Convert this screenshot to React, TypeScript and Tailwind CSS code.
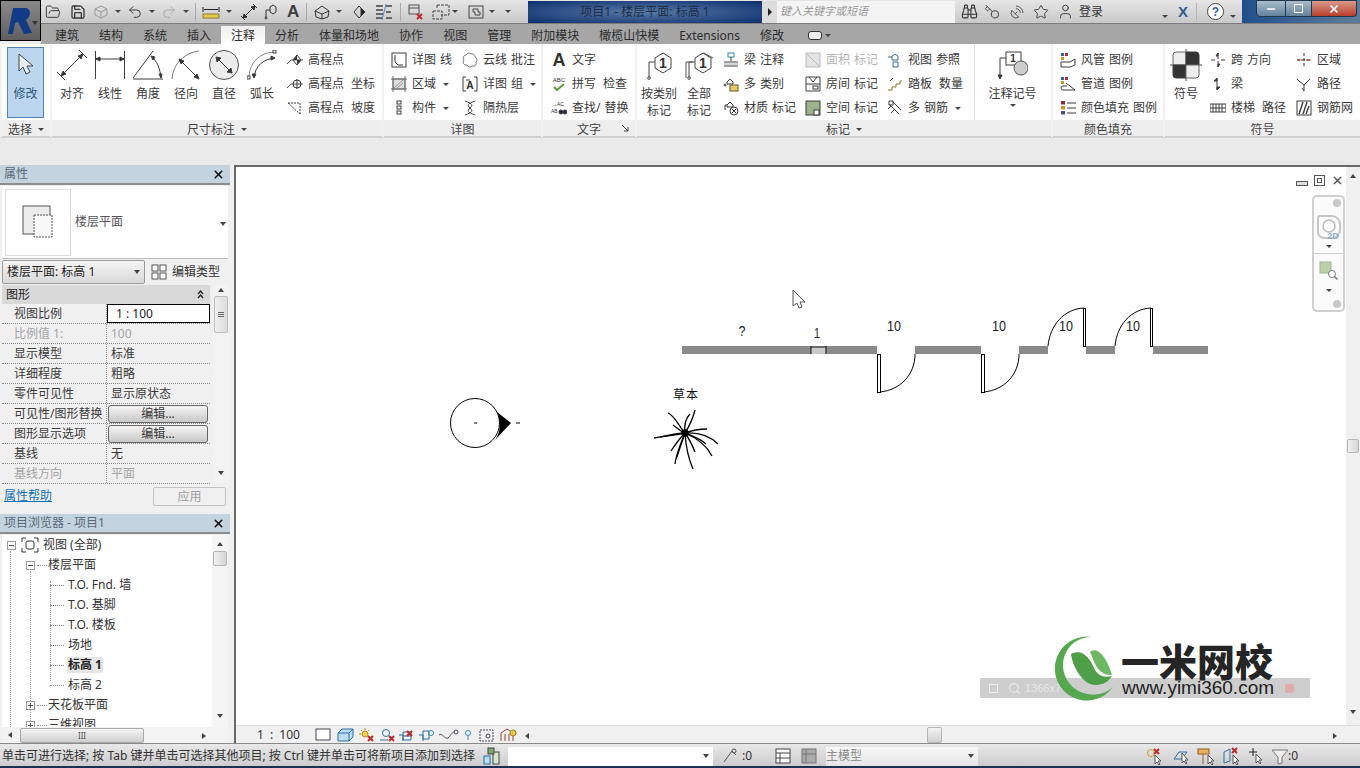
import type { ReactNode } from 'react';
import { Binoculars, FolderOpen, Key, Minus, Save, SatelliteDish, Search, Star, Undo2, Redo2, User, X } from 'lucide-react';

const dim = '#3d3d3d';

function Ico({ children, w = 16, h = 16, vb }: { children: ReactNode; w?: number; h?: number; vb?: string }) {
  return (
    <svg width={w} height={h} viewBox={vb ?? `0 0 ${w} ${h}`} fill="none" stroke={dim} strokeWidth="1" className="shrink-0">
      {children}
    </svg>
  );
}

function Caret({ className = '' }: { className?: string }) {
  return <span className={`inline-block w-0 h-0 border-x-[3px] border-x-transparent border-t-[3px] border-t-[#444] ${className}`} />;
}

function Tool({ icon, text, gray, wide }: { icon: ReactNode; text: ReactNode; gray?: boolean; wide?: boolean }) {
  return (
    <div className={`h-6 flex items-center whitespace-pre ${wide ? '[word-spacing:4px]' : '[word-spacing:1px]'} ${gray ? 'text-[#b5b5b5]' : ''}`}>
      <span className="w-4 h-4 flex items-center justify-center shrink-0">{icon}</span>
      <span className="ml-[5px]">{text}</span>
    </div>
  );
}

function Big({ icon, label, w, className = '' }: { icon: ReactNode; label: ReactNode; w: number; className?: string }) {
  return (
    <div style={{ width: w }} className={`flex flex-col items-center pt-[6px] shrink-0 leading-[17px] ${className}`}>
      <div className="h-[30px] flex items-center justify-center">{icon}</div>
      <div className="mt-[5px] text-center">{label}</div>
    </div>
  );
}

function Panel({ w, label, children, corner }: { w: number; label: ReactNode; children: ReactNode; corner?: ReactNode }) {
  return (
    <div style={{ width: w }} className="shrink-0 flex flex-col">
      <div className="h-[76px] flex bg-white overflow-hidden">{children}</div>
      <div className="relative h-[17px] pt-[3px] flex items-center justify-center gap-[6px] bg-[#eeeeee] border-b border-[#cfcfcf] text-[#444]">
        {label}
        {corner}
      </div>
    </div>
  );
}

function Tag({ double }: { double?: boolean }) {
  return (
    <Ico w={32} h={30}>
      {double && <path d="M13 8l8-5 9 5" stroke="#555" />}
      {double && <path d="M3 28V12h7" stroke="#555" />}
      <path d="M6 12h6M6 12v15" stroke="#444" />
      <path d="M12 8l8-5 8 5v10l-8 5-8-5z" fill="#fff" stroke="#444" />
      <circle cx="6" cy="28" r="1.3" />
      <text x="20" y="18" textAnchor="middle" fontSize="14" fontWeight="700" stroke="none" fill="#333" fontFamily="Liberation Sans, sans-serif">1</text>
    </Ico>
  );
}

function Elev({ kind }: { kind: number }) {
  return (
    <Ico>
      <path d="M0 12l4-4h12" stroke="#555" />
      {kind === 0 && <path d="M6 8l4-5v5zM10 8h4l-4 5z" fill="#333" stroke="none" />}
      {kind === 0 && <path d="M10 3l4 5-4 5-4-5z" />}
      {kind === 1 && <circle cx="10" cy="8" r="4" />}
      {kind === 1 && <path d="M10 3v10" />}
    </Ico>
  );
}

const quickIcon = 'h-[16px] w-[16px] text-[#3d3d3d]';

function TitleBar() {
  return (
    <div className="h-6 flex items-center bg-linear-to-b from-[#e6e6e6] to-[#c9c9c9] border-b border-[#7c7c7c]">
      <div className="w-[487px] flex items-center shrink-0 overflow-hidden">
        <FolderOpen className={`${quickIcon} ml-[4px]`} strokeWidth={1.5} />
        <Save className={`${quickIcon} ml-[9px]`} strokeWidth={2} />
        <svg width="16" height="16" viewBox="0 0 16 16" fill="none" stroke="#9a9a9a" className="ml-[7px] shrink-0"><path d="M2 5l6-3 6 3v6l-6 3-6-3zM2 5l6 3 6-3M8 8v6" /></svg>
        <Caret className="ml-[6px]" />
        <Undo2 className={`${quickIcon} ml-[6px]`} strokeWidth={1.5} />
        <Caret className="ml-[6px]" />
        <Redo2 className="h-[16px] w-[16px] text-[#a9a9a9] ml-[6px]" strokeWidth={1.5} />
        <Caret className="ml-[6px]" />
        <span className="ml-[6px] h-[18px] border-l border-[#ababab]" />
        <svg width="18" height="16" viewBox="0 0 18 16" fill="none" className="ml-[6px] shrink-0"><path d="M1 3v5M17 3v5M2 5.5h14" stroke="#222" /><rect x="1" y="10" width="16" height="4" fill="#e8c84e" stroke="#8a7a2a" /></svg>
        <Caret className="ml-[6px]" />
        <svg width="18" height="18" viewBox="0 0 18 18" fill="none" stroke="#333" className="ml-[8px] shrink-0"><path d="M3 15L15 3M1 13l4 4M13 1l4 4" /><path d="M3 15l1-4 3 3zM15 3l-4 1 3 3z" fill="#333" /></svg>
        <svg width="16" height="16" viewBox="0 0 16 16" fill="none" stroke="#333" className="ml-[5px] shrink-0"><path d="M7 3l3-2 3 2v5l-3 2-3-2z" /><path d="M7 6H3v7" /><circle cx="3" cy="14" r="1" /></svg>
        <span className="ml-[8px] text-[17px] font-bold leading-none text-[#3d3d3d] font-['Liberation_Sans',sans-serif]">A</span>
        <span className="ml-[7px] h-[18px] border-l border-[#ababab]" />
        <svg width="16" height="16" viewBox="0 0 16 16" fill="none" stroke="#333" className="ml-[7px] shrink-0"><path d="M1 7l7-5 7 5-1 6-6 2-6-2z" /><path d="M1 7l7 3 7-3M8 10v5" /></svg>
        <Caret className="ml-[6px]" />
        <svg width="14" height="14" viewBox="0 0 14 14" fill="none" stroke="#333" className="ml-[10px] shrink-0"><path d="M7 1l6 6-6 6-5-6z" /><path d="M9 3l4 4-4 4z" fill="#222" /></svg>
        <svg width="18" height="16" viewBox="0 0 18 16" fill="none" stroke="#444" className="ml-[9px] shrink-0"><path d="M8 2H1M8 6H1M8 10H1M8 14H1M11 2h6M11 8h5M11 14h6" strokeWidth="1.4" /><path d="M11 0L7 16" stroke="#4d8fd0" /></svg>
        <span className="ml-[7px] h-[18px] border-l border-[#ababab]" />
        <svg width="16" height="16" viewBox="0 0 16 16" fill="none" stroke="#555" className="ml-[7px] shrink-0"><rect x="1" y="1" width="10" height="9" /><path d="M1 4h10" /><path d="M9 10l5 5M14 10l-5 5" stroke="#c02a2a" strokeWidth="2" /></svg>
        <svg width="18" height="16" viewBox="0 0 18 16" fill="none" stroke="#444" className="ml-[8px] shrink-0"><path d="M5 1h12v10H9M5 1v4M1 7h9v8H1z" strokeDasharray="3 1" /></svg>
        <Caret className="ml-[2px]" />
        <svg width="16" height="14" viewBox="0 0 16 14" fill="none" stroke="#444" className="ml-[10px] shrink-0"><rect x="1" y="1" width="14" height="12" /><path d="M5 4h5v3h2v3H7V7H5z" /></svg>
        <Caret className="ml-[5px]" />
        <Caret className="ml-[10px]" />
      </div>
      <div className="w-[234px] h-[22px] shrink-0 flex items-center justify-center bg-radial from-[#5a7ba8] to-[#0c2d6b] text-[#1b2c44] text-xs whitespace-pre">
        项目1 - 楼层平面: 标高 1
      </div>
      <div className="w-[15px] h-[22px] shrink-0 flex items-center justify-center bg-[#dcdcdc]">
        <span className="w-0 h-0 border-y-[4px] border-y-transparent border-l-[4px] border-l-[#222]" />
      </div>
      <div className="w-[178px] h-[22px] shrink-0 flex items-center pl-[3px] bg-[#f4f4f4] text-[#9a9a9a] text-[11px] italic">键入关键字或短语</div>
      <Binoculars className="h-[17px] w-[17px] ml-[6px] text-[#333] shrink-0" strokeWidth={1.5} />
      <Key className="h-[16px] w-[16px] ml-[6px] text-[#444] shrink-0 -scale-x-100" strokeWidth={1.5} />
      <SatelliteDish className="h-[16px] w-[16px] ml-[9px] text-[#444] shrink-0" strokeWidth={1.3} />
      <Star className="h-[16px] w-[16px] ml-[8px] text-[#333] shrink-0" strokeWidth={1.3} />
      <User className="h-[17px] w-[17px] ml-[8px] text-[#333] shrink-0" strokeWidth={1.3} />
      <span className="ml-[5px] w-[60px] text-xs text-[#333] shrink-0">登录</span>
      <span className="ml-[23px]"><Caret /></span>
      <span className="ml-[10px] text-[15px] font-bold leading-none text-[#2f5f8f] font-['Liberation_Sans',sans-serif]">X</span>
      <span className="ml-[8px] h-[18px] border-l border-[#b5b5b5]" />
      <span className="ml-[10px] w-[17px] h-[17px] rounded-full border border-[#444] bg-white flex items-center justify-center text-[12px] font-bold text-[#2b63a8] font-['Liberation_Sans',sans-serif] shrink-0">?</span>
      <span className="ml-[6px]"><Caret /></span>
      <div className="ml-[6px] flex-1 h-[23px] bg-linear-to-r from-[#1f4f8c] to-[#5c7c99] flex items-start">
        <div className="ml-[14px] w-[30px] h-[17px] bg-linear-to-b from-[#a9bccb] to-[#64829b] border border-[#24364c] rounded-bl flex items-center justify-center">
          <Minus className="h-3 w-3 text-white" strokeWidth={3} />
        </div>
        <div className="w-[26px] h-[17px] bg-linear-to-b from-[#a9bccb] to-[#64829b] border-y border-r border-[#24364c] flex items-center justify-center">
          <span className="w-[9px] h-[9px] border border-white" />
        </div>
        <div className="w-[45px] h-[17px] bg-linear-to-b from-[#d69a8c] to-[#b83b2a] border-y border-r border-[#24364c] rounded-br flex items-center justify-center">
          <X className="h-3 w-3 text-white" strokeWidth={3.5} />
        </div>
      </div>
    </div>
  );
}

function Tabs() {
  const tabs = ['建筑', '结构', '系统', '插入', '注释', '分析', '体量和场地', '协作', '视图', '管理', '附加模块', '橄榄山快模', 'Extensions', '修改'];
  return (
    <div className="h-5 flex items-end pl-1 bg-[#a6a6a6] text-[#2c2c2c] text-xs">
      {tabs.map((t) => (
        <span key={t} className={`h-[18px] pt-[2px] px-[10px] flex items-center ${t === '注释' ? 'bg-linear-to-b from-[#eeeeee] to-white' : ''}`}>{t}</span>
      ))}
      <span className="ml-[14px] h-[18px] flex items-center gap-[3px]">
        <span className="w-[14px] h-[9px] rounded-[3px] border border-[#333] bg-[#eee]" />
        <Caret />
      </span>
    </div>
  );
}

function Ribbon() {
  return (
    <div className="h-[94px] flex gap-[2px] pl-[2px] bg-[#f1f1f1] text-xs text-[#3a3a3a] border-b border-[#d5d5d5]">
      <Panel w={48} label={<><span>选择</span><Caret /></>}>
        <div className="ml-[5px] mt-[3px] w-[37px] h-[71px] bg-[#bcd6f0] border border-[#4f81b3] flex flex-col items-center pt-[5px]">
          <svg width="18" height="24" viewBox="0 0 18 24" fill="#e8eef5" stroke="#444"><path d="M2 1v17l4-4 3 7 4-2-3-6h6z" /></svg>
          <span className="mt-[9px] text-[#35587a]">修改</span>
        </div>
      </Panel>

      <Panel w={330} label={<><span>尺寸标注</span><Caret /></>}>
        <Big w={38} className="ml-px" label="对齐" icon={<Ico w={30} h={30}><path d="M0 22l8 8M22 0l8 8M4 26L26 4" /><path d="M4 26l2-5 3 3zM26 4l-5 2 3 3z" fill="#333" /></Ico>} />
        <Big w={38} label="线性" icon={<Ico w={30} h={30}><path d="M.5 1v28M29.5 1v28M1 9h28" /><path d="M1 9l4-2v4zM29 9l-4-2v4z" fill="#333" /></Ico>} />
        <Big w={38} label="角度" icon={<Ico w={30} h={30}><path d="M0 29h30M0 28L20 1" /><path d="M18 6c6 5 9 12 10 22" /><path d="M18 6l4 1-2 3zM28 28l-2-4h3z" fill="#333" /></Ico>} />
        <Big w={38} label="径向" icon={<Ico w={30} h={30}><path d="M1 29C2 14 13 3 28 1" stroke="#777" /><path d="M8 9l20 20" /><path d="M8 9l5 2-3 3zM28 29l-5-2 3-3z" fill="#333" /></Ico>} />
        <Big w={38} label="直径" icon={<Ico w={30} h={30}><circle cx="15" cy="15" r="14.5" fill="#ececec" stroke="#555" /><path d="M7 7l16 16" /><path d="M7 7l5 1-4 4zM23 23l-5-1 4-4z" fill="#333" /></Ico>} />
        <Big w={38} label="弧长" icon={<Ico w={30} h={30}><path d="M2 26C3 12 13 3 26 2" stroke="#888" /><path d="M7 28C8 16 16 9 28 8" /><path d="M7 28l-2-4h4zM28 8l-4-2v4z" fill="#333" /><rect x="0" y="26" width="3" height="3" fill="#fff" /><rect x="26" y="0" width="3" height="3" fill="#fff" /></Ico>} />
        <div className="ml-[6px]">
          <div className="pt-[4px]">
            <Tool wide icon={<Elev kind={0} />} text="高程点" />
            <Tool wide icon={<Elev kind={1} />} text="高程点 坐标" />
            <Tool wide icon={<Ico><path d="M1 3h12v11M1 3l12 11" strokeDasharray="2 1" /></Ico>} text="高程点 坡度" />
          </div>
        </div>
      </Panel>

      <Panel w={157} label="详图">
        <div className="ml-[7px] w-[71px] pt-[4px]">
          <Tool icon={<Ico><rect x="1" y="1" width="14" height="14" /><path d="M4 3v7l3 3h5" /></Ico>} text="详图 线" />
          <Tool icon={<Ico><rect x="2" y="3" width="12" height="10" fill="#dedede" stroke="#888" /><path d="M0 3h16M0 13h16M2 0v16M14 0v16" stroke="#666" /><path d="M3 12l9-8M6 12l6-5" stroke="#999" /></Ico>} text={<>区域 <Caret className="ml-[3px] mb-[2px]" /></>} />
          <Tool icon={<Ico><rect x="6" y="1" width="4" height="3" /><rect x="6" y="6" width="4" height="3" /><rect x="6" y="11" width="4" height="3" /></Ico>} text={<>构件 <Caret className="ml-[3px] mb-[2px]" /></>} />
        </div>
        <div className="pt-[4px]">
          <Tool icon={<Ico><path d="M4 3a3 3 0 015-1 3 3 0 014 3 3 3 0 011 5 3 3 0 01-4 4 3 3 0 01-5-1 3 3 0 01-3-5 3 3 0 012-5z" stroke="#777" /></Ico>} text="云线 批注" />
          <Tool icon={<Ico><path d="M4 1H1v14h3M12 1h3v14h-3" /><text x="8" y="13" textAnchor="middle" fontSize="10" fontWeight="700" stroke="none" fill="#333">A</text><path d="M4 4h4" /></Ico>} text={<>详图 组 <Caret className="ml-[3px] mb-[2px]" /></>} />
          <Tool icon={<Ico><path d="M3 1c8 3 8 4 5 7-3 3-3 4 5 7M13 1C5 4 5 5 8 8c3 3 3 4-5 7" /></Ico>} text="隔热层" />
        </div>
      </Panel>

      <Panel w={92} label="文字" corner={<svg width="7" height="7" viewBox="0 0 7 7" fill="none" stroke="#444" className="absolute right-[6px] top-[5px]"><path d="M0 0l6 6M6 2v4H2" /></svg>}>
        <div className="ml-2 pt-[4px]">
          <div className="h-6 flex items-center"><span className="w-4 text-[18px] font-bold leading-none text-[#333] text-center font-['Liberation_Sans',sans-serif]">A</span><span className="ml-[5px]">文字</span></div>
          <Tool wide icon={<Ico><text x="8" y="6" textAnchor="middle" fontSize="6" stroke="none" fill="#333" fontFamily="Liberation Sans">ABC</text><path d="M3 11l3 3 7-6" stroke="#5a9a30" strokeWidth="2" /></Ico>} text="拼写 检查" />
          <Tool icon={<Ico><text x="1" y="6" fontSize="5" stroke="none" fill="#333" fontFamily="Liberation Sans">→AC</text><text x="0" y="13" fontSize="5" stroke="none" fill="#333" fontFamily="Liberation Sans">AB</text><circle cx="10" cy="12" r="2" fill="#224" /><circle cx="14" cy="12" r="2" fill="#224" /></Ico>} text="查找/ 替换" />
        </div>
      </Panel>

      <Panel w={414} label={<><span>标记</span><Caret /></>}>
        <Big w={40} className="ml-[2px]" icon={<Tag />} label={<>按类别<br />标记</>} />
        <Big w={40} icon={<Tag double />} label={<>全部<br />标记</>} />
        <div className="ml-1 w-[82px] pt-[4px] shrink-0">
          <Tool icon={<Ico><path d="M1 10h14M1 14h14" /><path d="M1 12h14" stroke="#aaa" /><rect x="5" y="1" width="6" height="4" stroke="#3a87b0" /><path d="M8 5v4" /></Ico>} text="梁 注释" />
          <Tool icon={<Ico><path d="M4 6l3-3 3 3v2H4z" /><rect x="7" y="9" width="8" height="6" fill="#e8c86a" stroke="#6a5a20" /><circle cx="2" cy="9" r="1" /></Ico>} text="多 类别" />
          <Tool icon={<Ico><path d="M4 5l3-3 3 3v2H4zM4 5H2v5" /><circle cx="11" cy="11" r="4" /><path d="M9 9l4 4M13 9l-4 4" /></Ico>} text="材质 标记" />
        </div>
        <div className="w-[82px] pt-[4px] shrink-0">
          <Tool gray icon={<Ico><rect x="1" y="1" width="14" height="14" fill="#e4e4e4" stroke="#bbb" /><path d="M2 2l12 12" stroke="#bbb" /></Ico>} text="面积 标记" />
          <Tool icon={<Ico><path d="M1 1h14v14H1zM1 8h14M4 1l4 5 4-5" /><rect x="8" y="10" width="5" height="3" /></Ico>} text="房间 标记" />
          <Tool icon={<Ico><rect x="1" y="1" width="14" height="14" fill="#9db38a" /><rect x="9" y="10" width="5" height="5" fill="#fff" /></Ico>} text="空间 标记" />
        </div>
        <div className="w-[87px] pt-[4px] shrink-0">
          <Tool icon={<Ico><path d="M5 4l3-2 3 2v4H5zM5 5H1M6 10h5v5H6z" stroke="#356a8f" /></Ico>} text="视图 参照" />
          <Tool wide icon={<Ico><path d="M1 14h4v-3h4V8h4V5h2" stroke="#8a7428" /><path d="M3 5l3-3" /></Ico>} text="踏板 数量" />
          <Tool icon={<Ico><path d="M2 4l10 10M6 2l8 8M1 9l3-3M4 13l3-3" /><path d="M2 1h4v4H2z" /></Ico>} text={<>多 钢筋 <Caret className="ml-[3px] mb-[2px]" /></>} />
        </div>
        <div className="w-[76px] border-l border-[#e2e2e2] flex flex-col items-center pt-[6px] shrink-0">
          <Ico w={30} h={30}><rect x="8" y="2" width="15" height="13" fill="#fff" /><path d="M8 8H2v19" /><path d="M2 29l-2-4h4z" fill="#333" /><circle cx="23" cy="18" r="7" fill="#ccc" stroke="#555" /><text x="15" y="12" textAnchor="middle" fontSize="10" fontWeight="700" stroke="none" fill="#333" fontFamily="Liberation Sans">1</text></Ico>
          <span className="mt-[5px] leading-[17px]">注释记号</span>
          <Caret className="mt-[2px]" />
        </div>
      </Panel>

      <Panel w={110} label="颜色填充">
        <div className="ml-[7px] pt-[4px]">
          <Tool icon={<Ico><rect x="1" y="1" width="3" height="3" fill="#3a5a90" stroke="none" /><rect x="5" y="1" width="3" height="3" fill="#a03030" stroke="none" /><rect x="1" y="5" width="3" height="3" fill="#c9962c" stroke="none" /><path d="M1 10h9l5-3v6l-5 2H1z" /></Ico>} text="风管 图例" />
          <Tool icon={<Ico><rect x="1" y="1" width="3" height="3" fill="#3a5a90" stroke="none" /><rect x="5" y="1" width="3" height="3" fill="#a03030" stroke="none" /><rect x="1" y="5" width="3" height="3" fill="#c9962c" stroke="none" /><path d="M6 7l9 7H3a2 2 0 010-4h4" /></Ico>} text="管道 图例" />
          <Tool icon={<Ico><rect x="1" y="1" width="4" height="3.5" fill="#8a3030" stroke="none" /><rect x="1" y="6" width="4" height="3.5" fill="#c9962c" stroke="none" /><rect x="1" y="11" width="4" height="3.5" fill="#44597a" stroke="none" /><path d="M7 3h9M7 8h9M7 13h9" /></Ico>} text="颜色填充 图例" />
        </div>
      </Panel>

      <Panel w={195} label="符号">
        <Big w={40} className="ml-px" label="符号" icon={
          <Ico w={32} h={32}>
            <path d="M16 0v32M0 16h32" stroke="#444" />
            <path d="M6 3h10v13H3V6a3 3 0 013-3z" fill="#eee" stroke="#666" />
            <path d="M16 3h10a3 3 0 013 3v10H16z" fill="#333" />
            <path d="M3 16h13v13H6a3 3 0 01-3-3z" fill="#333" />
            <path d="M16 16h13v10a3 3 0 01-3 3H16z" fill="#eee" stroke="#666" />
          </Ico>} />
        <div className="ml-1 w-[86px] pt-[4px] shrink-0">
          <Tool icon={<Ico><path d="M8 1v6M8 9v6M1 8h4M11 8h4" /><path d="M8 1l-2 3h2zM8 15l2-3H8z" fill="#333" /></Ico>} text="跨 方向" />
          <Tool icon={<Ico><path d="M7 2v12" /><path d="M7 2L4 5h3zM7 14l3-3H7z" fill="#333" /></Ico>} text="梁" />
          <Tool wide icon={<Ico><rect x="0" y="4" width="16" height="8" /><path d="M3 4v8M6 4v8M9 4v8M12 4v8M0 8h16" /></Ico>} text="楼梯 路径" />
        </div>
        <div className="pt-[4px]">
          <Tool icon={<Ico><path d="M8 1v14M1 8h14" stroke="#333" strokeDasharray="3 2" /><path d="M1 8h5M10 8h5" stroke="#c04040" /></Ico>} text="区域" />
          <Tool icon={<Ico><path d="M3 5l5 4 6-6M8 9v6M8 15l-2-3M1 3l2 2" /></Ico>} text="路径" />
          <Tool icon={<Ico><rect x="1" y="1" width="14" height="14" /><path d="M3 14L7 2M7 14l4-12M10 14l3-8" strokeWidth="1.4" /></Ico>} text="钢筋网" />
        </div>
      </Panel>
    </div>
  );
}

const props: [string, string, boolean?][] = [
  ['比例值 1:', '100', true],
  ['显示模型', '标准'],
  ['详细程度', '粗略'],
  ['零件可见性', '显示原状态'],
];

function PropRow({ name, children, gray }: { name: string; children: ReactNode; gray?: boolean }) {
  return (
    <div className={`h-5 flex border-b border-dotted border-[#8a8a8a] ${gray ? 'text-[#a5a5a5]' : ''}`}>
      <span className="w-[105px] pl-3 border-r border-dotted border-[#8a8a8a] whitespace-nowrap leading-[19px] shrink-0">{name}</span>
      <div className="flex-1 leading-[19px] pl-[4px]">{children}</div>
    </div>
  );
}

function EditBtn() {
  return (
    <div className="-ml-[3px] h-[18px] mt-px mr-[2px] rounded-[3px] border-[1.5px] border-[#666] bg-linear-to-b from-[#f4f4f4] to-[#c9c9c9] leading-[15px] text-center">编辑...</div>
  );
}

function Arrow({ dir }: { dir: 'up' | 'down' | 'left' | 'right' }) {
  const cls = {
    up: 'border-x-[3px] border-x-transparent border-b-[4px] border-b-[#444]',
    down: 'border-x-[3px] border-x-transparent border-t-[4px] border-t-[#444]',
    left: 'border-y-[3px] border-y-transparent border-r-[4px] border-r-[#444]',
    right: 'border-y-[3px] border-y-transparent border-l-[4px] border-l-[#444]',
  }[dir];
  return <span className={`inline-block w-0 h-0 ${cls}`} />;
}

function DockTitle({ text }: { text: string }) {
  return (
    <div className="h-[18px] flex items-center justify-between pl-1 pr-[5px] bg-[#c3d3df] text-[#5b6a77] border-b-2 border-[#8d8d8d] box-content">
      <span>{text}</span>
      <X className="h-[13px] w-[13px] text-[#111]" strokeWidth={3} />
    </div>
  );
}

function Properties() {
  return (
    <div className="h-[343px] flex flex-col shrink-0">
      <DockTitle text="属性" />
      <div className="mx-[2px] mt-px h-[73px] bg-white flex items-center shrink-0 border-b border-[#bbb]">
        <div className="ml-[3px] w-[66px] h-[67px] border border-[#ddd] flex items-center justify-center shrink-0">
          <svg width="32" height="34" viewBox="0 0 32 34" fill="#ececec" stroke="#555"><rect x="1" y="1" width="27" height="28" /><rect x="12" y="10" width="18" height="22" fill="#f8f8f8" strokeDasharray="2 1" /></svg>
        </div>
        <span className="ml-[4px] text-[#555]">楼层平面</span>
        <span className="ml-auto mr-[2px]"><Arrow dir="down" /></span>
      </div>
      <div className="h-[26px] flex items-center shrink-0">
        <div className="ml-[2px] w-[143px] h-6 rounded-[2px] border border-[#9a9a9a] bg-linear-to-b from-[#f5f5f5] to-[#d9d9d9] flex items-center justify-between px-[4px]">
          <span className="text-[#222]">楼层平面: 标高 1</span>
          <Arrow dir="down" />
        </div>
        <svg width="16" height="16" viewBox="0 0 16 16" fill="#fff" stroke="#555" className="ml-[6px]"><rect x="1" y="1" width="6" height="6" /><rect x="9" y="1" width="6" height="6" /><rect x="1" y="9" width="6" height="6" /><rect x="9" y="9" width="6" height="6" /></svg>
        <span className="ml-[5px] text-[#333]">编辑类型</span>
      </div>
      <div className="flex-1 flex min-h-0 pl-[2px] text-[#3a3a3a] overflow-hidden">
        <div className="w-[208px]">
          <div className="h-[19px] bg-[#d9d9d9] flex items-center justify-between pl-1 pr-[6px] text-[#222]">
            <span>图形</span>
            <svg width="7" height="9" viewBox="0 0 7 9" fill="none" stroke="#222" strokeWidth="1.3"><path d="M1 4l2.5-3L6 4M1 8l2.5-3L6 8" /></svg>
          </div>
          <div className="h-5 flex border-b border-dotted border-[#8a8a8a]">
            <span className="w-[105px] pl-3 border-r border-dotted border-[#8a8a8a] leading-[19px] shrink-0">视图比例</span>
            <div className="flex-1 border border-black bg-white leading-[17px] pl-[8px] text-[#222]">1 : 100</div>
          </div>
          {props.map(([n, v, g]) => <PropRow key={n} name={n} gray={g}>{v}</PropRow>)}
          <PropRow name="可见性/图形替换"><EditBtn /></PropRow>
          <PropRow name="图形显示选项"><EditBtn /></PropRow>
          <PropRow name="基线">无</PropRow>
          <PropRow name="基线方向" gray>平面</PropRow>
        </div>
        <div className="w-4 ml-[3px] bg-[#f3f3f3] flex flex-col items-center pt-[3px]">
          <Arrow dir="up" />
          <div className="mt-[4px] w-[14px] h-[37px] bg-linear-to-r from-[#f0f0f0] to-[#dcdcdc] border border-[#bdbdbd] rounded-[2px] flex flex-col items-center justify-center gap-px">
            <span className="w-[6px] border-t border-[#666]" /><span className="w-[6px] border-t border-[#666]" /><span className="w-[6px] border-t border-[#666]" />
          </div>
          <span className="mt-auto mb-[5px]"><Arrow dir="down" /></span>
        </div>
      </div>
      <div className="h-[24px] flex items-center justify-between pl-1 pr-[4px] shrink-0">
        <span className="text-[#1371b8] underline">属性帮助</span>
        <span className="w-[73px] h-[19px] rounded-[2px] border border-[#c4c4c4] text-center leading-[17px] text-[#9d9d9d]">应用</span>
      </div>
    </div>
  );
}

function Box({ plus }: { plus?: boolean }) {
  return (
    <span className="relative w-[9px] h-[9px] border border-[#9a9a9a] bg-white shrink-0 flex items-center justify-center">
      <span className="w-[5px] border-t border-[#555]" />
      {plus && <span className="absolute h-[5px] border-l border-[#555]" />}
    </span>
  );
}

function Leaf({ text, active }: { text: string; active?: boolean }) {
  return (
    <div className="h-5 flex items-center pl-[48px]">
      <span className="w-[14px] border-t border-dotted border-[#8a8a8a]" />
      <span className={`ml-[3px] px-px ${active ? 'font-bold bg-[#e5e5e5] text-[#222]' : ''}`}>{text}</span>
    </div>
  );
}

function Browser() {
  return (
    <div className="flex-1 flex flex-col min-h-0 mt-[6px]">
      <DockTitle text="项目浏览器 - 项目1" />
      <div className="relative mx-[2px] mt-[1px] flex-1 min-h-0 bg-white overflow-hidden text-[#333]">
        <div className="absolute left-[8px] top-[16px] h-[200px] border-l border-dotted border-[#9a9a9a]" />
        <div className="absolute left-[28px] top-[36px] h-[180px] border-l border-dotted border-[#9a9a9a]" />
        <div className="absolute left-[48px] top-[46px] h-[100px] border-l border-dotted border-[#9a9a9a]" />
        <div className="pr-[16px]">
          <div className="h-5 flex items-center pl-[5px] mt-0">
            <Box />
            <svg width="18" height="16" viewBox="0 0 18 16" fill="none" stroke="#333" className="ml-[5px]"><path d="M1 5V1h4M13 1h4v4M17 11v4h-4M5 15H1v-4" /><rect x="5" y="4" width="8" height="8" rx="2" /></svg>
            <span className="ml-[4px]">视图 (全部)</span>
          </div>
          <div className="h-5 flex items-center pl-[24px]"><Box /><span className="ml-[2px] w-[10px] border-t border-dotted border-[#8a8a8a]" /><span className="ml-[1px]">楼层平面</span></div>
          <Leaf text="T.O. Fnd. 墙" />
          <Leaf text="T.O. 基脚" />
          <Leaf text="T.O. 楼板" />
          <Leaf text="场地" />
          <Leaf text="标高 1" active />
          <Leaf text="标高 2" />
          <div className="h-5 flex items-center pl-[24px]"><Box plus /><span className="ml-[2px] w-[10px] border-t border-dotted border-[#8a8a8a]" /><span className="ml-[1px]">天花板平面</span></div>
          <div className="h-5 flex items-center pl-[24px]"><Box plus /><span className="ml-[2px] w-[10px] border-t border-dotted border-[#8a8a8a]" /><span className="ml-[1px]">三维视图</span></div>
        </div>
        <div className="absolute right-0 top-0 bottom-0 w-[16px] bg-[#f5f5f5] flex flex-col items-center pt-[7px]">
          <Arrow dir="up" />
          <span className="mt-[5px] w-[14px] h-[15px] bg-linear-to-r from-[#f2f2f2] to-[#d5d5d5] border border-[#b5b5b5] rounded-[2px]" />
          <span className="mt-auto mb-[5px]"><Arrow dir="down" /></span>
        </div>
      </div>
      <div className="mx-[2px] h-[16px] bg-[#f3f3f3] flex items-center shrink-0 pl-[6px]">
        <Arrow dir="left" />
        <div className="ml-[8px] w-[124px] h-[15px] bg-linear-to-b from-[#f4f4f4] to-[#cfcfcf] border border-[#aaa] rounded-[2px] text-[8px] leading-[13px] text-center text-[#555]">III</div>
        <span className="ml-[58px]"><Arrow dir="right" /></span>
      </div>
    </div>
  );
}

function Plant() {
  const spikes = [
    'M685 433C672 436 662 436 654 438', 'M685 433C678 425 675 416 668 413', 'M685 433C690 425 693 418 695 410',
    'M685 433C693 430 700 429 707 429', 'M685 433C700 432 711 437 718 444', 'M685 433C697 438 707 446 712 456',
    'M685 433C686 448 689 460 693 469', 'M685 433C680 445 676 455 675 464', 'M685 433C680 438 675 445 671 451',
    'M685 433C675 433 667 436 660 437', 'M685 433C680 431 676 427 673 425', 'M685 433C690 440 693 447 695 452',
    'M685 433C684 425 686 418 690 414', 'M685 433C692 436 699 438 706 444', 'M685 433C682 442 679 450 677 457',
  ];
  return (
    <g stroke="#000" fill="none" strokeWidth="1.3">
      {spikes.map((d) => <path key={d} d={d} />)}
      <circle cx="685" cy="433" r="3" fill="#000" />
    </g>
  );
}

function Plan() {
  const num = (x: number, y: number, t: string, w: number) => (
    <text x={x} y={y} textAnchor="middle" fontSize="15" fill="#222" fontFamily="Liberation Sans, sans-serif" textLength={w} lengthAdjust="spacingAndGlyphs">{t}</text>
  );
  return (
    <svg className="absolute inset-0" width="1110" height="558" viewBox="236 167 1110 558" fill="none">
      <g fill="#8a8a8a">
        <rect x="682" y="346" width="195" height="8" />
        <rect x="915" y="346" width="66" height="8" />
        <rect x="1019" y="346" width="29" height="8" />
        <rect x="1086" y="346" width="29" height="8" />
        <rect x="1153" y="346" width="55" height="8" />
      </g>
      <rect x="811" y="346" width="15" height="8" fill="#c8c8c8" />
      <path d="M811 347h15M811 346v8M826 346v8" stroke="#111" />
      <g stroke="#000">
        <rect x="877.5" y="354.5" width="3" height="38" fill="#fff" />
        <path d="M880 392C900 390 915 375 915 354" />
        <rect x="981.5" y="354.5" width="3" height="38" fill="#fff" />
        <path d="M984 392C1004 390 1019 375 1019 354" />
        <rect x="1083.5" y="308.5" width="2" height="38" fill="#fff" />
        <path d="M1084 308C1064 309 1050 325 1048 346" />
        <rect x="1150.5" y="308.5" width="2" height="38" fill="#fff" />
        <path d="M1151 308C1131 309 1117 325 1115 346" />
      </g>
      {num(742, 336, '?', 7)}
      {num(817, 338, '1', 6)}
      {num(894, 331, '10', 14)}
      {num(999, 331, '10', 14)}
      {num(1066, 331, '10', 14)}
      {num(1133, 331, '10', 14)}
      <text x="686" y="399" textAnchor="middle" fontSize="12" fill="#111" letterSpacing="1" fontFamily="Noto Sans CJK SC, sans-serif">草本</text>
      <Plant />
      <circle cx="475" cy="423" r="24.5" stroke="#000" fill="#fff" />
      <path d="M497 412L511 423L495 440C501 432 501 420 497 412z" fill="#000" />
      <path d="M474 423h3M516 423h4" stroke="#000" />
      <path d="M793 290v16l4-3 2 5 3-1-2-5h5z" fill="#fff" stroke="#555" />
    </svg>
  );
}

function NavBar() {
  return (
    <div className="absolute right-px top-[28px] w-[33px] h-[117px] rounded-[5px] border-2 border-[#cfcfcf] bg-[#fbfbfb] flex flex-col items-center">
      <span className="self-end mt-[2px] mr-[2px] w-[8px] h-[8px] rounded-full bg-[#c8c8c8]" />
      <svg width="26" height="30" viewBox="0 0 26 30" fill="none" className="mt-[5px]"><path d="M4 4h12a8 8 0 018 8v6a8 8 0 01-8 8H8a6 6 0 01-6-6V6a2 2 0 012-2z" stroke="#c5c5c5" strokeWidth="2" /><circle cx="13" cy="14" r="6" stroke="#bbb" strokeWidth="1.5" /><text x="17" y="27" textAnchor="middle" fontSize="9" fontWeight="700" fill="#8eaad0" fontFamily="Liberation Sans">2D</text></svg>
      <Caret className="mt-[3px]" />
      <span className="mt-[5px] w-full border-t border-[#cfcfcf]" />
      <svg width="20" height="20" viewBox="0 0 20 20" fill="none" className="mt-[7px]"><rect x="1" y="1" width="11" height="11" fill="#bcd0ae" stroke="#a0b48f" /><circle cx="13" cy="13" r="3.5" stroke="#777" fill="#fff" /><path d="M15.5 15.5l3 3" stroke="#777" strokeWidth="1.5" /></svg>
      <Caret className="mt-[8px]" />
      <span className="self-end mt-auto mb-[2px] mr-[2px] w-[8px] h-[8px] rounded-full bg-[#c8c8c8]" />
    </div>
  );
}

function ViewBar() {
  return (
    <div className="h-[18px] flex items-center bg-[#f0f0f0] text-xs text-[#333] border-t border-[#dcdcdc] shrink-0">
      <span className="ml-[21px] w-[58px] whitespace-pre [word-spacing:3px]">1 : 100</span>
      <svg width="204" height="16" viewBox="0 0 204 16" fill="none" stroke="#445" className="shrink-0">
        <rect x="1" y="2" width="14" height="11" fill="#fff" />
        <path d="M23 6l4-4h11v8l-4 4H23zM23 6h11v8M34 6l4-4" stroke="#2c6fa8" fill="#bcdcf2" />
        <circle cx="50" cy="7" r="3" fill="#f0d050" stroke="#b09020" /><path d="M50 1v2M44 7h2M46 3l1 1M54 3l-1 1" stroke="#b09020" /><path d="M53 9l5 5M58 9l-5 5" stroke="#c02a2a" strokeWidth="2" />
        <circle cx="71" cy="6" r="3.5" stroke="#2c6fa8" /><path d="M65 13h8" stroke="#2c6fa8" /><path d="M74 9l5 5M79 9l-5 5" stroke="#c02a2a" strokeWidth="2" />
        <path d="M84 8h4v6M88 5h8v8h-8zM88 9h8" stroke="#2c6fa8" /><path d="M92 4l5 5M97 4l-5 5" stroke="#c02a2a" strokeWidth="2" />
        <path d="M104 8h4v6M108 4h6v8h-6z" stroke="#2c6fa8" /><circle cx="116" cy="6" r="2.5" stroke="#3a8a9a" />
        <path d="M124 8c3-3 6 5 9 3s3-6 7-6" stroke="#555" /><circle cx="141" cy="5" r="2" fill="#fff" />
        <circle cx="153" cy="6" r="2.5" stroke="#3a8aba" /><path d="M153 9v4" stroke="#3a8aba" />
        <rect x="165" y="3" width="13" height="11" strokeDasharray="2 1" /><circle cx="173" cy="9" r="2" fill="#fff" />
        <path d="M186 14V6l6-4 6 4v8M190 14V7M194 14V7" stroke="#8a4a3a" /><circle cx="198" cy="6" r="3" fill="#e8c84e" stroke="#a08020" />
      </svg>
      <span className="ml-[6px]"><Arrow dir="left" /></span>
      <div className="ml-[398px] w-[15px] h-[16px] bg-linear-to-b from-[#f4f4f4] to-[#d2d2d2] border border-[#b5b5b5] rounded-[2px] shrink-0" />
      <span className="ml-[391px]"><Arrow dir="right" /></span>
    </div>
  );
}

function Canvas() {
  return (
    <div className="flex-1 min-w-0 flex flex-col border-l-2 border-t-2 border-[#696969]">
      <div className="flex-1 flex min-h-0">
        <div className="relative flex-1 bg-white overflow-hidden">
          <Plan />
          <div className="absolute right-[2px] top-[7px] flex items-center gap-[6px]">
            <span className="w-[12px] h-[5px] mt-[5px] border border-[#555] bg-[#ddd]" />
            <span className="relative w-[11px] h-[11px] border border-[#555] flex items-center justify-center"><span className="w-[5px] h-[5px] border border-[#555]" /></span>
            <X className="h-[13px] w-[13px] text-[#555]" strokeWidth={2.5} />
          </div>
          <NavBar />
        </div>
        <div className="w-[14px] bg-[#f0f0f0] flex flex-col items-center pt-[7px] pb-[5px]">
          <Arrow dir="up" />
          <span className="mt-[261px] w-[12px] h-[14px] bg-linear-to-r from-[#f2f2f2] to-[#d5d5d5] border border-[#b5b5b5] rounded-[2px]" />
          <span className="mt-auto"><Arrow dir="down" /></span>
        </div>
      </div>
      <ViewBar />
    </div>
  );
}

function StatusBar() {
  return (
    <div className="h-[25px] pt-[2px] flex items-center bg-linear-to-b from-[#e9e9e9] to-[#cdcdcd] border-t border-[#8a8a8a] border-b-2 border-b-[#1b3052] text-xs text-[#333] shrink-0">
      <span className="ml-[2px] w-[477px] overflow-hidden whitespace-pre shrink-0">单击可进行选择; 按 Tab 键并单击可选择其他项目; 按 Ctrl 键并单击可将新项目添加到选择</span>
      <svg width="18" height="18" viewBox="0 0 18 18" fill="none" stroke="#445" className="ml-[4px] shrink-0"><rect x="1" y="9" width="6" height="8" fill="#bcdcf2" stroke="#2c6fa8" /><rect x="10" y="5" width="6" height="12" fill="#d8e8c8" /><rect x="5" y="1" width="6" height="6" fill="#7ea86a" /></svg>
      <div className="ml-[7px] w-[205px] h-[19px] bg-white flex items-center justify-end pr-[4px] shrink-0"><Arrow dir="down" /></div>
      <svg width="16" height="16" viewBox="0 0 16 16" fill="none" stroke="#555" className="ml-[9px] shrink-0"><path d="M2 14L10 3M10 3l4 4" /><circle cx="12" cy="3" r="2" /></svg>
      <span className="ml-[4px] w-[26px]">:0</span>
      <svg width="16" height="16" viewBox="0 0 16 16" fill="#fff" stroke="#444" className="ml-[7px] shrink-0"><rect x="1" y="1" width="14" height="14" /><path d="M1 5h14M5 5v10M1 10h14" /></svg>
      <svg width="16" height="16" viewBox="0 0 16 16" fill="#aaa" stroke="#777" className="ml-[10px] shrink-0"><rect x="1" y="1" width="14" height="14" /><path d="M5 1v14M1 6h14" /></svg>
      <div className="ml-[9px] w-[152px] h-[19px] bg-linear-to-b from-[#f8f8f8] to-[#e5e5e5] flex items-center justify-between pr-[4px] text-[#8c8c8c] shrink-0"><span>主模型</span><Arrow dir="down" /></div>
      <svg width="154" height="18" viewBox="0 0 154 18" fill="none" stroke="#555" className="ml-[168px] shrink-0">
        <circle cx="5" cy="6" r="3.5" stroke="#c9a52c" /><path d="M8 2l5 5M13 2l-5 5" stroke="#c02a2a" strokeWidth="2" /><path d="M9 8v9l2-2 2 3 1-1-2-3h3z" fill="#fff" />
        <path d="M28 12l5-7h8l-5 7z" stroke="#2c6fa8" /><path d="M36 6v10l2-2 2 3 1-1-2-3h3z" fill="#fff" />
        <rect x="52" y="2" width="11" height="5" fill="#e8b060" stroke="#9a5a20" /><path d="M57 7v10" stroke="#9a5a20" /><path d="M62 8v9l2-2 2 3 1-1-2-3h3z" fill="#fff" />
        <path d="M78 5l6-3v12l-6 2z" stroke="#2c6fa8" /><path d="M86 1l5 5M91 1l-5 5" stroke="#c02a2a" strokeWidth="2" /><path d="M87 8v9l2-2 2 3 1-1-2-3h3z" fill="#fff" />
        <path d="M103 5h8M107 1v8" stroke="#222" /><path d="M110 7v9l2-2 2 3 1-1-2-3h3z" fill="#fff" />
        <path d="M126 3h16l-6 7v6l-4 1v-7z" fill="#eee" stroke="#777" />
      </svg>
      <span className="-ml-[12px]">:0</span>
    </div>
  );
}

function Watermark() {
  return (
    <>
      <div className="absolute left-[980px] top-[678px] w-[330px] h-[20px] bg-[#c9c9c9]/90 flex items-center text-[11px] text-[#e9e9e9] font-['Liberation_Sans',sans-serif]">
        <span className="ml-[9px] w-[9px] h-[9px] border border-[#eee]" />
        <Search className="ml-[10px] h-[13px] w-[13px] text-[#eee]" />
        <span className="ml-[4px]">1366x7</span>
        <span className="ml-auto mr-[16px] w-[9px] h-[9px] rounded-[2px] bg-[#e2a9ae]" />
      </div>
      <svg className="absolute left-[1050px] top-[630px]" width="70" height="76" viewBox="1050 630 70 76">
        <path d="M1092 637A32 32 0 1 0 1113 687A30 30 0 0 1 1063 667A28 28 0 0 1 1092 637Z" fill="#55a84e" />
        <path d="M1071 654C1082 648 1090 658 1094 668C1098 676 1104 678 1112 676C1106 686 1092 688 1084 680C1076 672 1072 662 1071 654Z" fill="#4f9f48" />
        <path d="M1090 652C1098 645 1108 660 1112 675C1104 676 1098 670 1095 664C1093 660 1092 656 1090 652Z" fill="#6cb863" />
      </svg>
      <div className="absolute left-[1121px] top-[644px] text-[38px] leading-[34px] font-black text-[#252525] whitespace-nowrap">一米网校</div>
      <div className="absolute left-[1122px] top-[678px] text-[19px] leading-[19px] text-[#222] font-['Liberation_Sans',sans-serif] whitespace-nowrap">www.yimi360.com</div>
    </>
  );
}

export default function App() {
  return (
    <div className="relative w-[1360px] h-[768px] overflow-hidden flex flex-col bg-[#ececec] font-['Noto_Sans','Noto_Sans_CJK_SC',sans-serif]">
      <div className="flex h-11 shrink-0">
        <div className="w-[41px] h-[41px] bg-linear-to-b from-[#8a8a8a] to-[#5f5f5f] border border-black flex items-center justify-center shrink-0">
          <svg width="36" height="34" viewBox="0 0 36 34"><path d="M5 30L10 4h12c6 0 7 8 1 12l6 13-8 1-6-12-3 1-2 11z" fill="#123a86" /><path d="M29 17l6 0-3 4z" fill="#333" /></svg>
        </div>
        <div className="flex-1 min-w-0">
          <TitleBar />
          <Tabs />
        </div>
      </div>
      <Ribbon />
      <div className="h-[27px] bg-[#eaeaea] shrink-0" />
      <div className="flex flex-1 min-h-0">
        <div className="w-[234px] shrink-0 flex flex-col text-xs bg-[#f0f0f0] pr-[4px]">
          <Properties />
          <Browser />
        </div>
        <Canvas />
      </div>
      <StatusBar />
      <Watermark />
    </div>
  );
}
